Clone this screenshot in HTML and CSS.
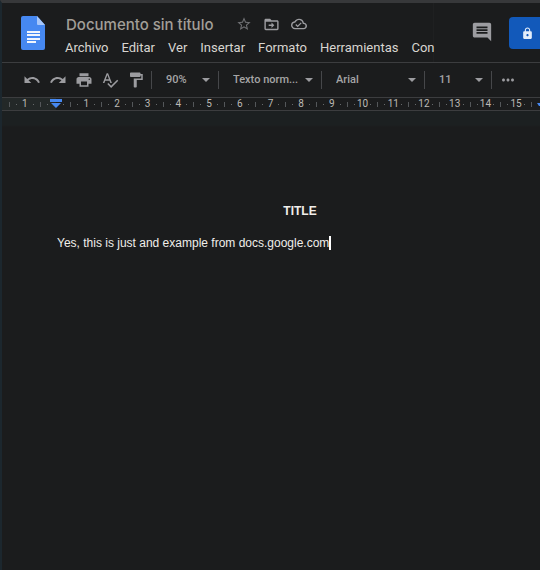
FILE: index.html
```html
<!DOCTYPE html>
<html lang="es">

<head>
    <meta charset="UTF-8">
    <meta name="viewport" content="width=device-width, initial-scale=1.0">
    <title>Documento sin título</title>
    <link rel="stylesheet" href="styles.css">
</head>

<body>
    <header class="header">
        <a class="logo" href="#" aria-label="Documentos">
            <svg width="24" height="34" viewBox="0 0 24 34">
                <path fill="#4688f1" d="M2 0h14l8 9v23a2 2 0 0 1-2 2H2a2 2 0 0 1-2-2V2a2 2 0 0 1 2-2z" />
                <path fill="#a8c7fa" d="M16 0l8 9h-7a1 1 0 0 1-1-1z" />
                <path fill="#f1f5fd" d="M6 15h13v2H6zM6 18h13v2H6zM6 22h13v2H6zM6 25h9v2H6z" />
            </svg>
        </a>
        <div class="heading">
            <div class="title-row">
                <input class="doc-title" type="text" value="Documento sin título" aria-label="Título del documento">
                <button class="icon-btn star" aria-label="Destacar">
                    <svg width="16" height="16" viewBox="0 0 24 24"><path d="M22 9.24l-7.19-.62L12 2 9.19 8.63 2 9.24l5.46 4.73L5.82 21 12 17.27 18.18 21l-1.63-7.03L22 9.24zM12 15.4l-3.76 2.27 1-4.28-3.32-2.88 4.38-.38L12 6.1l1.71 4.04 4.38.38-3.32 2.88 1 4.28L12 15.4z" /></svg>
                </button>
                <button class="icon-btn" aria-label="Mover">
                    <svg width="17" height="17" viewBox="0 0 24 24"><path d="M20 6h-8l-2-2H4c-1.1 0-2 .9-2 2v12c0 1.1.9 2 2 2h16c1.1 0 2-.9 2-2V8c0-1.1-.9-2-2-2zm0 12H4V8h16v10zM12 17l4-4-4-4v3H8v2h4z" /></svg>
                </button>
                <button class="icon-btn" aria-label="Estado del documento">
                    <svg width="16" height="16" viewBox="0 0 24 24"><path d="M19.35 10.04A7.49 7.49 0 0 0 12 4C9.11 4 6.6 5.64 5.35 8.04A5.99 5.99 0 0 0 0 14c0 3.31 2.69 6 6 6h13c2.76 0 5-2.24 5-5 0-2.64-2.05-4.78-4.65-4.96zM19 18H6a4 4 0 0 1-.44-7.97l1.07-.11.5-.95a5.5 5.5 0 0 1 10.26 1.46l.3 1.5 1.53.11A3 3 0 0 1 19 18zm-9-3.82l-2.09-2.09L6.5 13.5 10 17l6.01-6.01-1.41-1.41z" /></svg>
                </button>
            </div>
            <nav class="menu">
                <button>Archivo</button>
                <button>Editar</button>
                <button>Ver</button>
                <button>Insertar</button>
                <button>Formato</button>
                <button>Herramientas</button>
                <button>Con</button>
            </nav>
        </div>
        <div class="actions">
            <button class="icon-btn comments" aria-label="Comentarios">
                <svg width="22" height="22" viewBox="0 0 24 24"><path d="M21.99 4c0-1.1-.89-2-1.99-2H4c-1.1 0-2 .9-2 2v12c0 1.1.9 2 2 2h14l4 4-.01-18zM18 14H6v-2h12v2zm0-3H6V9h12v2zm0-3H6V6h12v2z" /></svg>
            </button>
            <button class="share" aria-label="Compartir">
                <svg width="13" height="13" viewBox="0 0 24 24"><path d="M18 8h-1V6c0-2.76-2.24-5-5-5S7 3.24 7 6v2H6c-1.1 0-2 .9-2 2v10c0 1.1.9 2 2 2h12c1.1 0 2-.9 2-2V10c0-1.1-.9-2-2-2zm-6 9c-1.1 0-2-.9-2-2s.9-2 2-2 2 .9 2 2-.9 2-2 2zM9 8V6c0-1.71 1.29-3.1 3-3.1s3 1.39 3 3.1v2z" /></svg>
                <svg class="share-mark" width="3" height="3" viewBox="0 0 3 3"><path d="M0 0h3v3H0z" /></svg>
            </button>
        </div>
    </header>

    <div class="toolbar">
        <div class="tools">
            <button class="icon-btn" aria-label="Deshacer">
                <svg width="18" height="18" viewBox="0 0 24 24"><path d="M12.5 8c-2.65 0-5.05.99-6.9 2.6L2 7v9h9l-3.62-3.62c1.39-1.16 3.16-1.88 5.12-1.88 3.54 0 6.55 2.31 7.6 5.5l2.37-.78C21.08 11.03 17.15 8 12.5 8z" /></svg>
            </button>
            <button class="icon-btn" aria-label="Rehacer">
                <svg width="18" height="18" viewBox="0 0 24 24"><path d="M18.4 10.6C16.55 8.99 14.15 8 11.5 8c-4.65 0-8.58 3.03-9.96 7.22L3.9 16c1.05-3.19 4.05-5.5 7.6-5.5 1.95 0 3.73.72 5.12 1.88L13 16h9V7l-3.6 3.6z" /></svg>
            </button>
            <button class="icon-btn" aria-label="Imprimir">
                <svg width="18" height="18" viewBox="0 0 24 24"><path d="M19 8H5c-1.66 0-3 1.34-3 3v6h4v4h12v-4h4v-6c0-1.66-1.34-3-3-3zm-3 11H8v-5h8v5zm3-7c-.55 0-1-.45-1-1s.45-1 1-1 1 .45 1 1-.45 1-1 1zm-1-9H6v4h12V3z" /></svg>
            </button>
            <button class="icon-btn" aria-label="Ortografía">
                <svg width="18" height="18" viewBox="0 0 24 24"><path d="M12.45 16h2.09L9.43 3H7.57L2.46 16h2.09l1.12-3h5.64l1.14 3zm-6.02-5L8.5 5.48 10.57 11H6.43zm15.16.59l-8.09 8.09L9.83 16l-1.41 1.41 5.09 5.09L23 13l-1.41-1.41z" /></svg>
            </button>
            <button class="icon-btn" aria-label="Copiar formato">
                <svg width="18" height="18" viewBox="0 0 24 24"><path d="M18 4V3c0-.55-.45-1-1-1H5c-.55 0-1 .45-1 1v4c0 .55.45 1 1 1h12c.55 0 1-.45 1-1V6h1v4H9v11c0 .55.45 1 1 1h2c.55 0 1-.45 1-1v-9h8V4h-3z" /></svg>
            </button>
        </div>
        <div class="picker zoom">
            <select aria-label="Zoom"><option>90%</option></select>
        </div>
        <div class="picker style">
            <select aria-label="Estilos"><option>Texto norm...</option></select>
        </div>
        <div class="picker family">
            <select aria-label="Fuente"><option>Arial</option></select>
        </div>
        <div class="picker size">
            <select aria-label="Tamaño de fuente"><option>11</option></select>
        </div>
        <button class="icon-btn more" aria-label="Más">
            <svg width="18" height="18" viewBox="0 0 24 24"><path d="M6 10c-1.1 0-2 .9-2 2s.9 2 2 2 2-.9 2-2-.9-2-2-2zm12 0c-1.1 0-2 .9-2 2s.9 2 2 2 2-.9 2-2-.9-2-2-2zm-6 0c-1.1 0-2 .9-2 2s.9 2 2 2 2-.9 2-2-.9-2-2-2z" /></svg>
        </button>
    </div>

    <div class="ruler">
        <div class="unit">1</div>
        <div class="unit">
            <svg width="12" height="10" viewBox="0 0 12 10"><path fill="#4688f1" d="M0 0h12v3H0zM1 4h10L6 9z" /></svg>
        </div>
        <div class="unit">1</div>
        <div class="unit">2</div>
        <div class="unit">3</div>
        <div class="unit">4</div>
        <div class="unit">5</div>
        <div class="unit">6</div>
        <div class="unit">7</div>
        <div class="unit">8</div>
        <div class="unit">9</div>
        <div class="unit">10</div>
        <div class="unit">11</div>
        <div class="unit">12</div>
        <div class="unit">13</div>
        <div class="unit">14</div>
        <div class="unit">15</div>
        <div class="ruler-end">
            <svg width="3" height="3" viewBox="0 0 3 3"><path fill="#4688f1" d="M0 0h3v3H2z" /></svg>
        </div>
    </div>

    <main class="page">
        <h1>TITLE</h1>
        <p>Yes, this is just and example from docs.google.com<span class="caret"></span></p>
    </main>
</body>

</html>
```

FILE: styles.css
```css
* {
    box-sizing: border-box;
}

body {
    margin: 0;
    min-height: 100vh;
    display: flex;
    flex-direction: column;
    overflow-x: hidden;
    background-color: #1b1c1d;
    border-top: 3px solid #37383a;
    border-left: 2px solid #1c272e;
    font-family: Roboto, "Liberation Sans", sans-serif;
    font-size: 13px;
    color: #d8d5d0;
}

button,
input,
select {
    margin: 0;
    padding: 0;
    border: none;
    background: none;
    font: inherit;
    color: inherit;
}

button {
    cursor: pointer;
    white-space: nowrap;
}

svg {
    display: block;
    flex: none;
}

.icon-btn {
    color: #9c9ca0;
}

.icon-btn svg,
.share svg {
    fill: currentColor;
}

/* header */
.header {
    display: flex;
    height: 60px;
    overflow: hidden;
    border-bottom: 1px solid #3c3d3f;
}

.logo {
    padding: 13px 20px 0 19px;
}

.heading {
    flex: 1;
    min-width: 0;
    padding-top: 10px;
    border-right: 1px solid #1f2021;
}

.title-row {
    display: flex;
    align-items: center;
    height: 22px;
    gap: 11px;
}

.doc-title {
    width: 160px;
    padding-left: 1px;
    font-family: Inter, sans-serif;
    font-size: 15px;
    font-weight: 500;
    color: #a29f98;
}

.star {
    color: #6f7073;
}

.menu {
    display: flex;
    gap: 13px;
    height: 24px;
}

.actions {
    flex: none;
    display: flex;
    align-items: flex-start;
    width: 106px;
    padding-top: 14px;
}

.comments {
    padding: 4px 16px 0 37px;
}

.share {
    display: flex;
    align-items: center;
    gap: 11px;
    height: 32px;
    padding: 0 12px;
    border-radius: 4px;
    background-color: #1259ba;
    color: #e3edfa;
}

.share-mark {
    color: #4fc3e8;
}

/* toolbar */
.toolbar {
    display: flex;
    align-items: center;
    height: 35px;
    padding-bottom: 1px;
    border-bottom: 1px solid #3c3d3f;
    font-size: 11px;
    font-weight: 500;
    color: #a5a5a6;
}

.tools {
    display: flex;
    gap: 8px;
    padding: 0 6px 0 21px;
}

.picker {
    display: flex;
    align-items: center;
    height: 18px;
    padding: 0 8px 0 14px;
    border-left: 1px solid #46474a;
}

.picker::after {
    content: "";
    border: 4px solid transparent;
    border-top-color: #9c9ca0;
    border-bottom: none;
}

.picker select {
    flex: 1;
    min-width: 0;
    appearance: none;
    outline: none;
}

.zoom {
    width: 67px;
}

.style,
.family {
    width: 103px;
}

.size {
    width: 67px;
}

.more {
    padding-left: 7px;
    border-left: 1px solid #46474a;
}

/* ruler */
.ruler {
    display: flex;
    height: 13px;
    padding-left: 7px;
    border-bottom: 1px solid #3c3d3f;
    background: linear-gradient(to right, #232828 54px, transparent 54px);
    font-size: 10px;
    line-height: 12px;
    color: #bcbab5;
}

/* each unit has a half tick on the left and two quarter dots */
.unit {
    flex: 1 1 0;
    min-width: 0;
    display: flex;
    align-items: center;
    justify-content: space-between;
    padding: 0 6px 0 7px;
    background: linear-gradient(#54575a, #54575a) left center / 1px 5px no-repeat;
}

.unit::before,
.unit::after {
    content: "";
    width: 1px;
    height: 1px;
    background-color: #66696b;
}

.ruler-end {
    display: flex;
    align-items: center;
    justify-content: flex-end;
    width: 9px;
    background: linear-gradient(#54575a, #54575a) left center / 1px 5px no-repeat;
}

/* document */
.page {
    flex: 1;
    padding: 92px 0 40px 55px;
    background: linear-gradient(#1c2021 14px, #1b1c1d 16px);
    font-family: "Liberation Sans", Arial, sans-serif;
    font-size: 12px;
    line-height: 16px;
    color: #f0eeea;
}

.page h1 {
    width: 486px;
    margin: 0 0 16px;
    font-size: 12px;
    font-weight: bold;
    text-align: center;
}

.page p {
    display: flex;
    align-items: center;
    margin: 0;
}

.caret {
    width: 2px;
    height: 14px;
    background-color: #fff;
}
```
